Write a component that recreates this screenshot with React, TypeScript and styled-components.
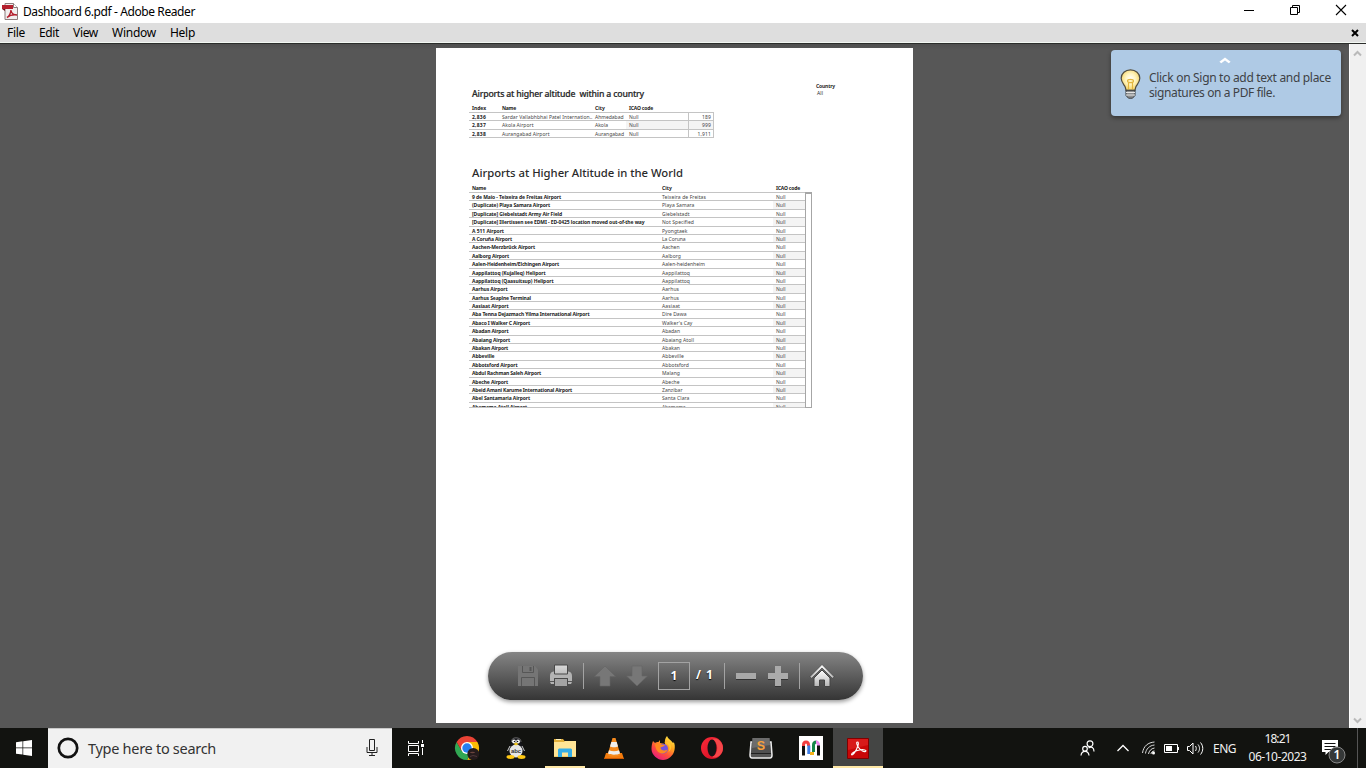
import React, { useLayoutEffect, useRef, useState } from "react";
import styled, { createGlobalStyle } from "styled-components";

const Global = createGlobalStyle`
  * { box-sizing: border-box; }
  html, body { margin: 0; overflow: hidden; }
  svg { display: block; flex: none; }
`;

const ui = `"Noto Sans", "Open Sans", sans-serif`;

/* Text set to a known line width by adjusting its tracking. */
const FitSpan = styled.span`
  display: inline-block;
  white-space: pre;
`;

function Fit({ w, children }: { w: number; children: string }) {
  const ref = useRef<HTMLSpanElement>(null);
  const [spacing, setSpacing] = useState(0);
  useLayoutEffect(() => {
    const el = ref.current;
    if (!el) return;
    const natural = el.getBoundingClientRect().width;
    setSpacing((w - natural) / children.length);
  }, [w, children]);
  return (
    <FitSpan ref={ref} style={{ letterSpacing: `${spacing}px` }}>
      {children}
    </FitSpan>
  );
}

const Screen = styled.div`
  width: 1366px;
  height: 768px;
  display: flex;
  flex-direction: column;
  font-family: ${ui};
  background: #fff;
  overflow: hidden;
`;

const TitleBar = styled.header`
  height: 23px;
  flex: none;
  display: flex;
  align-items: center;
  padding: 0 2px;
  background: #fff;
  font-size: 12px;
  line-height: 16px;
  color: #000;
`;
const Caption = styled.div`
  margin-left: 4px;
  flex: 1;
`;
const WindowButtons = styled.div`
  display: flex;
  height: 23px;
`;
const WindowButton = styled.div`
  width: 46px;
  display: flex;
  justify-content: center;
  padding-top: 4px;
`;

const MenuBar = styled.nav`
  height: 21px;
  flex: none;
  display: flex;
  align-items: flex-start;
  padding: 2px 7px 0 7px;
  gap: 14px;
  background: #dedede;
  border-bottom: 1px solid #2b2d2b;
  box-shadow: inset 0 -1px 0 #f2f7f2;
  font-size: 12px;
  line-height: 16px;
`;
const CloseDoc = styled.div`
  margin-left: auto;
  padding-top: 4px;
`;

const Workspace = styled.main`
  height: 684px;
  flex: none;
  display: flex;
  background: linear-gradient(#4f4f4f, #575757 6px);
`;
const Viewer = styled.div`
  flex: 1;
  position: relative;
  display: flex;
  padding: 4px 0 0 436px;
`;
const ScrollTrack = styled.div`
  width: 17px;
  background: #f0f0f0;
  border-left: 1px solid #fff;
  display: flex;
  flex-direction: column;
  justify-content: space-between;
  align-items: center;
  padding: 6px 1px 4px 0;
`;

const Sheet = styled.article`
  width: 477px;
  height: 675px;
  background: #fff;
  padding: 33px 0 0 33px;
  color: #2b2b2b;
`;
const SheetTop = styled.div`
  display: flex;
  height: 22px;
`;
const SmallTitle = styled.h2`
  margin: 0;
  padding: 6px 0 0 3px;
  width: 346px;
  font-size: 8.7px;
  line-height: 14px;
  font-weight: 500;
  color: #222;
  -webkit-text-stroke: 0.2px #333;
`;
const Filter = styled.div`
  font-size: 5px;
  line-height: 7px;
  padding-top: 2px;
`;
const FilterName = styled.div`
  font-weight: 700;
  padding-left: 1px;
`;
const FilterValue = styled.div`
  padding-left: 2px;
`;
const BigTitle = styled.h1`
  margin: 27px 0 0;
  padding-left: 3px;
  font-size: 11.3px;
  line-height: 16px;
  height: 20px;
  font-weight: 500;
  color: #2a2a2a;
`;

const HeadRow = styled.div<{ $cols: string; $h: number; $top: number }>`
  display: grid;
  grid-template-columns: ${(p) => p.$cols};
  font-size: 5px;
  line-height: 7px;
  height: ${(p) => p.$h}px;
  font-weight: 700;
  color: #222;
  padding: ${(p) => p.$top}px 0 0 3px;
`;
const Table = styled.div<{ $w: number; $h: number }>`
  width: ${(p) => p.$w}px;
  height: ${(p) => p.$h}px;
  overflow: hidden;
  border-top: 1px solid #c4c4c4;
  border-bottom: 1px solid #c4c4c4;
`;
const Row = styled.div<{ $cols: string; $shade: boolean }>`
  display: grid;
  grid-template-columns: ${(p) => p.$cols};
  height: 8.4px;
  border-bottom: 1px solid #c4c4c4;
  font-size: 5px;
  line-height: 8.4px;
  color: #444;
  > * { padding-left: 3px; white-space: nowrap; height: 7.4px; }
  > .band { background: ${(p) => (p.$shade ? "#f4f4f4" : "transparent")}; }
`;
const Strong = styled.div`
  font-weight: 700;
  color: #222;
`;
const Value = styled.div`
  border-left: 1px solid #c4c4c4;
  border-right: 1px solid #c4c4c4;
  text-align: right;
  padding-right: 2px;
`;
const WorldBlock = styled.div`
  display: flex;
`;
const TableThumb = styled.div`
  width: 7px;
  height: 216px;
  border: 1px solid #a6a6a6;
  border-top-width: 2px;
  background: #fff;
`;

const Hint = styled.aside`
  position: absolute;
  left: 1111px;
  top: 6px;
  width: 230px;
  height: 66px;
  border-radius: 4px;
  background: #afcae5;
  box-shadow: 0 2px 4px rgba(0, 0, 0, 0.4);
  display: flex;
  flex-direction: column;
  padding-top: 7px;
`;
const HintArrow = styled.div`
  padding-left: 108px;
`;
const HintBody = styled.div`
  display: flex;
  padding-left: 9px;
  font-size: 12px;
  line-height: 15px;
  color: #3e4246;
  margin-top: 2px;
`;
const HintLines = styled.div`
  margin-left: 8px;
  margin-top: 4px;
  display: flex;
  flex-direction: column;
  align-items: flex-start;
`;
const HintIcon = styled.div`
  padding-top: 3px;
`;

const Pill = styled.div`
  position: absolute;
  left: 488px;
  top: 608px;
  width: 375px;
  height: 48px;
  border-radius: 24px;
  background: linear-gradient(#858585, #6d6d6d 30%, #353535);
  box-shadow: 0 2px 4px rgba(0, 0, 0, 0.4);
  display: flex;
  align-items: center;
  padding-left: 29px;
`;
const Tool = styled.div<{ $ml?: number }>`
  margin-left: ${(p) => p.$ml ?? 0}px;
`;
const Divider = styled.div<{ $ml: number }>`
  width: 1px;
  height: 26px;
  background: #a3a3a3;
  margin-left: ${(p) => p.$ml}px;
`;
const PageField = styled.div`
  width: 32px;
  height: 28px;
  margin: -1px 0 0 10px;
  border: 1px solid #a3a3a3;
  color: #fff;
  font: 700 12px/25px ${ui};
  text-align: center;
  text-shadow: 0 1px 1px #000;
`;
const PageCount = styled.div`
  width: 18px;
  margin: -3px 0 0 6px;
  color: #fff;
  font: 700 12px/20px ${ui};
  text-shadow: 0 1px 1px #000;
`;

const Taskbar = styled.footer`
  height: 40px;
  flex: none;
  display: flex;
  background: #121310;
  color: #f1f1f1;
`;
const Start = styled.div`
  width: 48px;
  padding: 12px 0 0 16px;
`;
const Search = styled.div`
  width: 344px;
  background: #f1f1f1;
  border-top: 1px solid #c9c9c9;
  display: flex;
  align-items: center;
  padding: 0 14px 2px 9px;
  color: #333;
  font-size: 14.5px;
`;
const SearchLabel = styled.div`
  flex: 1;
  margin-left: 9px;
`;
const TaskButton = styled.div<{ $w: number; $active?: boolean; $line?: number }>`
  width: ${(p) => p.$w}px;
  height: 40px;
  display: flex;
  align-items: center;
  justify-content: center;
  background: ${(p) => (p.$active ? "#444544" : "transparent")};
  background-image: ${(p) => (p.$line ? "linear-gradient(#ffe8a6, #ffe8a6)" : "none")};
  background-size: ${(p) => p.$line ?? 0}px 2px;
  background-position: center bottom;
  background-repeat: no-repeat;
`;
const Tray = styled.div`
  margin-left: auto;
  display: flex;
  align-items: center;
  font-size: 12px;
`;
const TrayItem = styled.div<{ $w: number }>`
  width: ${(p) => p.$w}px;
`;
const Clock = styled.div`
  width: 77px;
  font-size: 12px;
  line-height: 18px;
  display: flex;
  flex-direction: column;
  align-items: center;
  padding-right: 10px;
`;
const Notice = styled.div`
  width: 37px;
  height: 40px;
  border-right: 1px solid #555;
  padding-top: 11px;
`;

const names: [string, number, string, number][] = [
  ["9 de Maio - Teixeira de Freitas Airport", 89, "Teixeira de Freitas", 44],
  ["(Duplicate) Playa Samara Airport", 78, "Playa Samara", 32.5],
  ["[Duplicate] Giebelstadt Army Air Field", 90, "Giebelstadt", 27.5],
  ["[Duplicate] Illertissen see EDMI - ED-0425 location moved out-of-the way", 172.5, "Not Specified", 32],
  ["A 511 Airport", 32, "Pyongtaek", 25.5],
  ["A Coruña Airport", 40, "La Coruna", 23.5],
  ["Aachen-Merzbrück Airport", 63, "Aachen", 17.5],
  ["Aalborg Airport", 37, "Aalborg", 19],
  ["Aalen-Heidenheim/Elchingen Airport", 87, "Aalen-heidenheim", 43],
  ["Aappilattoq (Kujalleq) Heliport", 73.5, "Aappilattoq", 28],
  ["Aappilattoq (Qaasuitsup) Heliport", 81.5, "Aappilattoq", 28],
  ["Aarhus Airport", 35.5, "Aarhus", 17],
  ["Aarhus Seaplne Terminal", 59, "Aarhus", 17],
  ["Aasiaat Airport", 36.5, "Aasiaat", 18],
  ["Aba Tenna Dejazmach Yilma International Airport", 117.5, "Dire Dawa", 24.5],
  ["Abaco I Walker C Airport", 58, "Walker's Cay", 30.5],
  ["Abadan Airport", 36.5, "Abadan", 18],
  ["Abaiang Airport", 38, "Abaiang Atoll", 32],
  ["Abakan Airport", 36, "Abakan", 18],
  ["Abbeville", 22.5, "Abbeville", 22],
  ["Abbotsford Airport", 45.5, "Abbotsford", 27],
  ["Abdul Rachman Saleh Airport", 69, "Malang", 18],
  ["Abeche Airport", 36, "Abeche", 17.5],
  ["Abeid Amani Karume International Airport", 100, "Zanzibar", 20.5],
  ["Abel Santamaria Airport", 58, "Santa Clara", 27.5],
  ["Abemama Atoll Airport", 55, "Abemama", 23.5],
];

const local: [string, string, number, string, number, string, number][] = [
  ["2,836", "Sardar Vallabhbhai Patel Internation..", 90.5, "Ahmedabad", 28.5, "189", 9],
  ["2,837", "Akola Airport", 31.5, "Akola", 13, "999", 9],
  ["2,838", "Aurangabad Airport", 47.5, "Aurangabad", 29, "1,911", 13.5],
];

const localCols = "30px 93px 34px 62px 26px";
const worldCols = "190px 114px 32px";

const PdfIcon = () => (
  <svg width="17" height="17" viewBox="0 0 17 17">
    <path d="M3 .5h8.500l4 4v12H3z" fill="#f1eeee" stroke="#8d7d7d" />
    <path d="M11.500.5v4h4" fill="#fff" stroke="#8d7d7d" />
    <path d="M0 2h11v4H0z" fill="#b41f2d" />
    <path d="M0 6h3v2z" fill="#6c1019" />
    <path d="M5 14.500c2-1 4-4.500 4-7.500M9 7c.2 3 2 5 6 5M5 14.500c3-2.400 6-3 10-2.500" fill="none" stroke="#b41f2d" strokeWidth="1.500" />
  </svg>
);

const Bulb = () => (
  <svg width="21" height="30" viewBox="0 0 21 30">
    <defs>
      <radialGradient id="glow" cx=".5" cy=".45" r=".6">
        <stop offset="0" stopColor="#fff" />
        <stop offset=".45" stopColor="#fff4bd" />
        <stop offset="1" stopColor="#f2cd55" />
      </radialGradient>
    </defs>
    <path d="M10.500.8C5.300.8 1.200 4.500 1.200 9.200c0 3.300 1.800 5.300 3.300 7.500 1 1.500 1.200 3 1.500 4.600h9c.3-1.600.5-3.100 1.500-4.600 1.500-2.200 3.300-4.200 3.300-7.500C19.800 4.500 15.700.8 10.500.8z" fill="url(#glow)" stroke="#4f4c42" strokeWidth="1.200" />
    <path d="M8.500 20v-7.500M12.500 20v-7.500" stroke="#e3b63e" strokeWidth="1.200" />
    <ellipse cx="10.500" cy="12" rx="3" ry="1.700" fill="#fff5bd" stroke="#e3b63e" strokeWidth="1.200" />
    <path d="M6 21.300h9v5.200l-2.500 2.700h-4L6 26.500z" fill="#8c8f91" stroke="#3b3e40" />
    <path d="M6 23.500h9M6 26h9" stroke="#e5e5e5" />
  </svg>
);

const Chevron = ({ down, color = "#b9b9b9", w = 9 }: { down?: boolean; color?: string; w?: number }) => (
  <svg width={w} height="7" viewBox="0 0 9 7" preserveAspectRatio="none">
    <path d={down ? "M1 1.500l3.500 3.500L8 1.500" : "M1 5.500L4.500 2 8 5.500"} fill="none" stroke={color} strokeWidth="2" />
  </svg>
);

const Grads = () => (
  <svg width="0" height="0">
    <defs>
      <linearGradient id="lite" x1="0" y1="0" x2="0" y2="22" gradientUnits="userSpaceOnUse">
        <stop offset="0" stopColor="#dcdcdc" />
        <stop offset="1" stopColor="#979797" />
      </linearGradient>
      <linearGradient id="home" x1="0" y1="0" x2="0" y2="1">
        <stop offset="0" stopColor="#fff" />
        <stop offset="1" stopColor="#b5b5b5" />
      </linearGradient>
    </defs>
  </svg>
);

const Save = () => (
  <svg width="22" height="22" viewBox="0 0 22 22">
    <path d="M1 1h17l3 3.500V21H1z" fill="#757575" />
    <path d="M5.500 1v6.500h11V1M4.500 21v-8.500h13V21" fill="none" stroke="#565656" />
    <path d="M12.500 2h2v4h-2z" fill="#565656" />
  </svg>
);
const Print = () => (
  <svg width="24" height="24" viewBox="0 0 24 24">
    <path d="M4.500 7.500h15c2.500.5 3.500 2 3.500 4.500v6l-1 2h-3v-6H5v6H2l-1-2v-6c0-2.500 1-4 3.500-4.500z" fill="#b3b3b3" />
    <path d="M1 17.500h4M19 17.500h4" stroke="#555" fill="none" />
    <path d="M5.500 1h13v9h-13z" fill="url(#lite)" stroke="#494949" />
    <path d="M5.500 14.500h13v8h-13z" fill="#a3a3a3" stroke="#494949" />
  </svg>
);
const Arrow = ({ down }: { down?: boolean }) => (
  <svg width="22" height="22" viewBox="0 0 22 22">
    <path
      d={down ? "M6 1h10v10h5.500L11 21 .5 11H6z" : "M11 1l10.500 10.500H16V21H6v-9.500H.5z"}
      fill="#777"
      stroke="#646464"
      strokeWidth=".6"
    />
  </svg>
);
const Minus = () => (
  <svg width="22" height="22" viewBox="0 0 22 22">
    <path d="M1 8h20v6H1z" fill="#a9a9a9" />
    <path d="M1 14.500h20" stroke="#333" />
  </svg>
);
const Plus = () => (
  <svg width="22" height="22" viewBox="0 0 22 22">
    <path d="M8 2h6v7h7v6h-7v7H8v-7H1V9h7z" fill="#333" />
    <path d="M8 1h6v7h7v6h-7v7H8v-7H1V8h7z" fill="#aaa" />
  </svg>
);
const Home = () => (
  <svg width="26" height="24" viewBox="0 0 26 24">
    <path d="M5 14l8-8 8 8v8.500h-5.500V16h-5v6.500H5z" fill="url(#home)" stroke="#444" />
    <path d="M1 12.500l12-12 12 12-1.500 2L13 4 2.500 14.500z" fill="url(#home)" stroke="#444" strokeWidth=".7" />
  </svg>
);

const Chrome = () => (
  <svg width="26" height="26" viewBox="-1 -1 26 26">
    <path d="M12 12V6h10.400A12 12 0 0 1 12 24l5.200-9z" fill="#fbbc05" />
    <path d="M12 12l5.200 3L12 24A12 12 0 0 1 1.600 6l5.200 9z" fill="#31a853" />
    <path d="M1.600 6A12 12 0 0 1 22.400 6H12v6l-5.200 3z" fill="#e94335" />
    <circle cx="12" cy="12" r="6" fill="#fff" />
    <circle cx="12" cy="12" r="4.700" fill="#267ff0" />
    <circle cx="18.300" cy="18" r="6" fill="#251b1c" />
    <ellipse cx="17.500" cy="16.500" rx="2.500" ry=".8" fill="#6c443d" />
    <path d="M15 20.500l3-1 4 1" stroke="#50383a" fill="none" />
  </svg>
);
const Penguin = () => (
  <svg width="20" height="22" viewBox="0 0 20 22">
    <path d="M5.500 5C5.500 2 7 .5 10 .5S15 2 15 5l2 4c2 4 2 7-.5 10h-13C1 15 2 11 4 9z" fill="#15161a" />
    <path d="M5.500 5C5.500 2 7 .8 10 .8S15 2 15 5" fill="none" stroke="#777" strokeWidth=".8" />
    <ellipse cx="10" cy="14" rx="6.500" ry="6.500" fill="#e6e6e6" />
    <circle cx="8" cy="4.500" r="1.900" fill="#fff" />
    <circle cx="12" cy="4.500" r="1.900" fill="#fff" />
    <circle cx="8.500" cy="4.500" r=".8" fill="#111" />
    <circle cx="11.500" cy="4.500" r=".8" fill="#111" />
    <path d="M7.500 7L10 5.500 12.500 7 10 8.500z" fill="#f4c91d" />
    <path d="M4 9l-2.500 5M16 9l2.500 5" stroke="#ccc" />
    <ellipse cx="4.500" cy="20" rx="4" ry="1.900" fill="#ffc914" />
    <ellipse cx="15.500" cy="20" rx="4" ry="1.900" fill="#ffc914" />
    <text x="5" y="15.500" fontSize="6" fontWeight="700" fontFamily="Liberation Sans, sans-serif" textLength="10" fill="#333">abc</text>
  </svg>
);
const Folder = () => (
  <svg width="22" height="20" viewBox="0 0 22 20">
    <path d="M0 1h9l1.500 2H22v16H0z" fill="#e3b13c" />
    <path d="M0 4h10l1-1h11v15.500H0z" fill="#ffe596" />
    <path d="M2 1.500h5" stroke="#fff2c0" />
    <path d="M4 19v-7.500L5 10.500h12l1 1V19h-4v-4.500H8V19z" fill="#35aee8" />
  </svg>
);
const Vlc = () => (
  <svg width="20" height="23" viewBox="0 0 20 23">
    <path d="M2 16h16l2 6H0z" fill="#f27b0d" />
    <path d="M8.500 1h3l5 17c-3 2-10 2-13 0z" fill="#f58a1d" />
    <path d="M7.300 5h5.400l1.300 4.500c-2 1-6 1-8 0z" fill="#f2f0ed" />
    <path d="M5 13.200c3 1.300 7 1.300 10 0l1 3.300c-3 1.600-9 1.600-12 0z" fill="#eee" />
    <path d="M0 21.500h20" stroke="#cb5700" />
  </svg>
);
const Firefox = () => (
  <svg width="24" height="24" viewBox="0 0 24 24">
    <defs>
      <linearGradient id="fox" x1=".85" y1="0" x2=".2" y2="1">
        <stop offset="0" stopColor="#fff04c" />
        <stop offset=".35" stopColor="#ffa51e" />
        <stop offset=".65" stopColor="#ff4d3d" />
        <stop offset="1" stopColor="#e31587" />
      </linearGradient>
    </defs>
    <path d="M2 5l2 2c1-.8 2-1 3.500-1L9 4v3l5 1c-.5-3 0-6 2-8 1 3 4 4 6 7 1-.5.500-1 .500-1.500C24 8 24 11 23.500 14c-1 5.500-6 10-11.500 10S.5 19 .5 13c0-3 .5-6 1.500-8z" fill="url(#fox)" />
    <circle cx="12" cy="12.700" r="5" fill="#7352dc" />
    <path d="M4 8.500c3-2 5-.5 7 0l3 .5c-1 1.500-3 1.700-4.500 2.500 0 3 4 4 7 2-1 4-5.500 5-8.500 3C5 14.500 4.500 11 4 8.500z" fill="#ff8a20" />
    <path d="M13 6.500c5 1 7 5 4.500 9.500 4-3 3.500-8-.5-10z" fill="#ffc52e" />
  </svg>
);
const Opera = () => (
  <svg width="22" height="22" viewBox="0 0 22 22">
    <defs>
      <linearGradient id="op" x1="0" y1="0" x2="1" y2="1">
        <stop offset="0" stopColor="#ff2b3a" />
        <stop offset="1" stopColor="#c90920" />
      </linearGradient>
    </defs>
    <ellipse cx="11" cy="11" rx="11" ry="11" fill="url(#op)" />
    <path d="M11 2c3-2 11 1 11 9s-8 11-11 9c7-3 7-15 0-18z" fill="#f54649" />
    <ellipse cx="11" cy="11" rx="4.500" ry="8.500" fill="#141416" />
  </svg>
);
const Sublime = () => (
  <svg width="24" height="22" viewBox="0 0 24 22">
    <path d="M2 5L1 18c0 2 1 3 2 3h18c1 0 2-1 2-3L22 5z" fill="#555" stroke="#ececec" strokeWidth="1.500" />
    <path d="M3.500 1h17l1 15h-19z" fill="#505050" />
    <path d="M3.500 1h17l.5 7-18 3z" fill="#6c6c6c" />
    <path d="M2 16.500h20" stroke="#202020" />
    <text x="7.700" y="13" fontSize="12.500" fontWeight="700" fontFamily="Liberation Sans, sans-serif" fill="#f8a13c">S</text>
  </svg>
);
const Mapper = () => (
  <svg width="24" height="24" viewBox="0 0 24 24">
    <path d="M0 0h24v24H0z" fill="#fff" />
    <g fill="none" strokeWidth="3">
      <path d="M4.500 19.500V9" stroke="#111" />
      <path d="M4.500 10V9c0-4 5-4 5 0v1" stroke="#f23f42" />
      <path d="M9.800 9.500V18" stroke="#3d7ee8" />
      <path d="M11 17.500h4" stroke="#f6b219" />
      <path d="M14.500 16V9c0-3 2-3 3-3" stroke="#16864b" />
      <path d="M17 6c2 0 2.500 1 2.500 4" stroke="#ee87ef" />
      <path d="M19.500 9.500v10" stroke="#111" />
    </g>
  </svg>
);
const Acrobat = () => (
  <svg width="22" height="21" viewBox="0 0 22 21">
    <path d="M.5.500h21v20H.5z" fill="#c90707" stroke="#810000" />
    <path d="M1 1h20v6L1 12z" fill="#d81a1a" />
    <path d="M10.500 4c-2 0 0 4 1.500 6 2 3 5 4 6.500 3.500 2-1-2-2.500-6-1.500-4 .8-8 3-8 4.500 1 2 5-4 6.500-9 .6-2 .5-3.500-.5-3.500z" fill="none" stroke="#fff" strokeWidth="1.100" />
  </svg>
);

export default function App() {
  return (
    <Screen>
      <Global />
      <TitleBar>
        <PdfIcon />
        <Caption><Fit w={172}>Dashboard 6.pdf - Adobe Reader</Fit></Caption>
        <WindowButtons>
          <WindowButton>
            <svg width="12" height="12"><path d="M1 6.500h10" stroke="#000" /></svg>
          </WindowButton>
          <WindowButton>
            <svg width="12" height="12"><path d="M1.500 3.500h7v7h-7zM3.500 3.500v-2h7v7h-2" fill="none" stroke="#000" /></svg>
          </WindowButton>
          <WindowButton>
            <svg width="12" height="12"><path d="M1 1l10 10M11 1L1 11" stroke="#000" strokeWidth="1.100" /></svg>
          </WindowButton>
        </WindowButtons>
      </TitleBar>
      <MenuBar>
        <Fit w={18}>File</Fit>
        <Fit w={20}>Edit</Fit>
        <Fit w={25}>View</Fit>
        <Fit w={44}>Window</Fit>
        <Fit w={25}>Help</Fit>
        <CloseDoc>
          <svg width="8" height="8"><path d="M1 1l6 6M7 1L1 7" stroke="#000" strokeWidth="2" /></svg>
        </CloseDoc>
      </MenuBar>

      <Workspace>
        <Viewer>
          <Sheet>
            <SheetTop>
              <SmallTitle><Fit w={172}>{"Airports at higher altitude  within a country"}</Fit></SmallTitle>
              <Filter>
                <FilterName><Fit w={19}>Country</Fit></FilterName>
                <FilterValue><Fit w={6}>All</Fit></FilterValue>
              </Filter>
            </SheetTop>
            <HeadRow $cols={localCols} $h={9} $top={2}>
              <span><Fit w={14}>Index</Fit></span>
              <span><Fit w={14}>Name</Fit></span>
              <span><Fit w={10}>City</Fit></span>
              <span><Fit w={24}>ICAO code</Fit></span>
            </HeadRow>
            <Table $w={245} $h={26}>
              {local.map(([id, name, nw, city, cw, alt, aw], i) => (
                <Row key={id} $cols={localCols} $shade={i === 1}>
                  <Strong><Fit w={14}>{id}</Fit></Strong>
                  <div><Fit w={nw}>{name}</Fit></div>
                  <div><Fit w={cw}>{city}</Fit></div>
                  <div className="band"><Fit w={9.5}>Null</Fit></div>
                  <Value className="band"><Fit w={aw}>{alt}</Fit></Value>
                </Row>
              ))}
            </Table>
            <BigTitle><Fit w={211}>Airports at Higher Altitude in the World</Fit></BigTitle>
            <HeadRow $cols={worldCols} $h={7} $top={0}>
              <span><Fit w={14}>Name</Fit></span>
              <span><Fit w={10}>City</Fit></span>
              <span><Fit w={24}>ICAO code</Fit></span>
            </HeadRow>
            <WorldBlock>
              <Table $w={336} $h={216}>
                {names.map(([name, nw, city, cw], i) => (
                  <Row key={name} $cols={worldCols} $shade={i % 2 === 1}>
                    <Strong><Fit w={nw}>{name}</Fit></Strong>
                    <div><Fit w={cw}>{city}</Fit></div>
                    <div className="band"><Fit w={9.5}>Null</Fit></div>
                  </Row>
                ))}
              </Table>
              <TableThumb />
            </WorldBlock>
          </Sheet>

          <Hint>
            <HintArrow><Chevron color="#fff" w={12} /></HintArrow>
            <HintBody>
              <HintIcon><Bulb /></HintIcon>
              <HintLines>
                <Fit w={182}>Click on Sign to add text and place</Fit>
                <Fit w={126}>signatures on a PDF file.</Fit>
              </HintLines>
            </HintBody>
          </Hint>

          <Pill>
            <Grads />
            <Tool><Save /></Tool>
            <Tool $ml={10}><Print /></Tool>
            <Divider $ml={10} />
            <Tool $ml={10}><Arrow /></Tool>
            <Tool $ml={10}><Arrow down /></Tool>
            <PageField>1</PageField>
            <PageCount><Fit w={18}>/ 1</Fit></PageCount>
            <Divider $ml={10} />
            <Tool $ml={10}><Minus /></Tool>
            <Tool $ml={10}><Plus /></Tool>
            <Divider $ml={10} />
            <Tool $ml={9}><Home /></Tool>
          </Pill>
        </Viewer>
        <ScrollTrack>
          <Chevron />
          <Chevron down />
        </ScrollTrack>
      </Workspace>

      <Taskbar>
        <Start>
          <svg width="16" height="16" viewBox="0 0 16 16" fill="#fff">
            <path d="M0 2.200l6.500-.9v6.200H0zM7.200 1.200L16 0v7.500H7.200zM0 8.300h6.500v6.300L0 13.700zM7.200 8.300H16V16l-8.800-1.300z" />
          </svg>
        </Start>
        <Search>
          <svg width="22" height="22"><circle cx="11" cy="11" r="9.200" fill="none" stroke="#111" strokeWidth="2.700" /></svg>
          <SearchLabel><Fit w={128}>Type here to search</Fit></SearchLabel>
          <svg width="12" height="17" fill="none" stroke="#222">
            <path d="M3.500.5h5v11h-5zM1 8v5.500h10V8M6 13.500v3M3 16.500h6" />
          </svg>
        </Search>
        <TaskButton $w={48}>
          <svg width="17" height="16" fill="none" stroke="#fff">
            <path d="M.5 1v2.500h10V1M.5 5.500h10v6H.5zM.5 16v-2.500h10V16M14.500 0v3M14.500 8v7" />
            <path d="M13 4h3v3h-3z" fill="#fff" stroke="none" />
          </svg>
        </TaskButton>
        <TaskButton $w={54}><Chrome /></TaskButton>
        <TaskButton $w={44}><Penguin /></TaskButton>
        <TaskButton $w={54} $line={40}><Folder /></TaskButton>
        <TaskButton $w={44}><Vlc /></TaskButton>
        <TaskButton $w={54}><Firefox /></TaskButton>
        <TaskButton $w={44}><Opera /></TaskButton>
        <TaskButton $w={54}><Sublime /></TaskButton>
        <TaskButton $w={45}><Mapper /></TaskButton>
        <TaskButton $w={50} $active $line={50}><Acrobat /></TaskButton>
        <Tray>
          <TrayItem $w={37}>
            <svg width="16" height="17" fill="none" stroke="#fff" strokeWidth="1.200">
              <circle cx="10" cy="3.700" r="2.900" />
              <circle cx="5" cy="8.700" r="2.300" />
              <path d="M1 15.500c.5-5.500 7.500-5.500 8 0M8.500 8c3-2 5.500-.5 5.500 3.500" />
            </svg>
          </TrayItem>
          <TrayItem $w={25}>
            <svg width="12" height="8"><path d="M.5 7L6 1.500 11.500 7" fill="none" stroke="#fff" strokeWidth="1.300" /></svg>
          </TrayItem>
          <TrayItem $w={22}>
            <svg width="14" height="14" fill="none" stroke="#ddd" strokeWidth="1">
              <path d="M.5 12C1.500 5 6 1.500 12.500 1M3.500 12.500C4 8 7.500 4.500 12.500 4M6.500 13C7 10 9 7.500 12.500 7M9 13c0-1.500 1.500-3 3.500-3" />
              <circle cx="11.500" cy="12" r="1.500" fill="#fff" stroke="none" />
            </svg>
          </TrayItem>
          <TrayItem $w={23}>
            <svg width="15" height="9"><path d="M.5.500h13v8H.5z" fill="none" stroke="#fff" /><path d="M2 2h6v5H2zM14 3h1v3h-1z" fill="#fff" /></svg>
          </TrayItem>
          <TrayItem $w={26}>
            <svg width="17" height="15" fill="none" stroke="#fff">
              <path d="M.5 5.500h2l3.500-3.500v11L2.500 9.500h-2zM8.500 5c1 1.500 1 3.500 0 5M11 3.500c2 2.500 2 5.500 0 8M13.500 1.500c3 3.500 3 8.500 0 12" />
            </svg>
          </TrayItem>
          <TrayItem $w={31}><Fit w={23}>ENG</Fit></TrayItem>
          <Clock>
            <Fit w={26}>18:21</Fit>
            <Fit w={58}>06-10-2023</Fit>
          </Clock>
          <Notice>
            <svg width="26" height="26" viewBox="0 0 26 26">
              <path d="M1 1h16v12H7.500L4.500 16v-3H1z" fill="#fff" />
              <path d="M3.500 4.500h11M3.500 7.500h11M3.500 10.500h7" stroke="#111" />
              <circle cx="16" cy="16" r="8" fill="#353838" stroke="#888" />
              <text x="16" y="20" textAnchor="middle" fontSize="12" fontWeight="600" fontFamily="Noto Sans, sans-serif" fill="#fff">1</text>
            </svg>
          </Notice>
          <TrayItem $w={4} />
          <TrayItem $w={4} />
        </Tray>
      </Taskbar>
    </Screen>
  );
}
